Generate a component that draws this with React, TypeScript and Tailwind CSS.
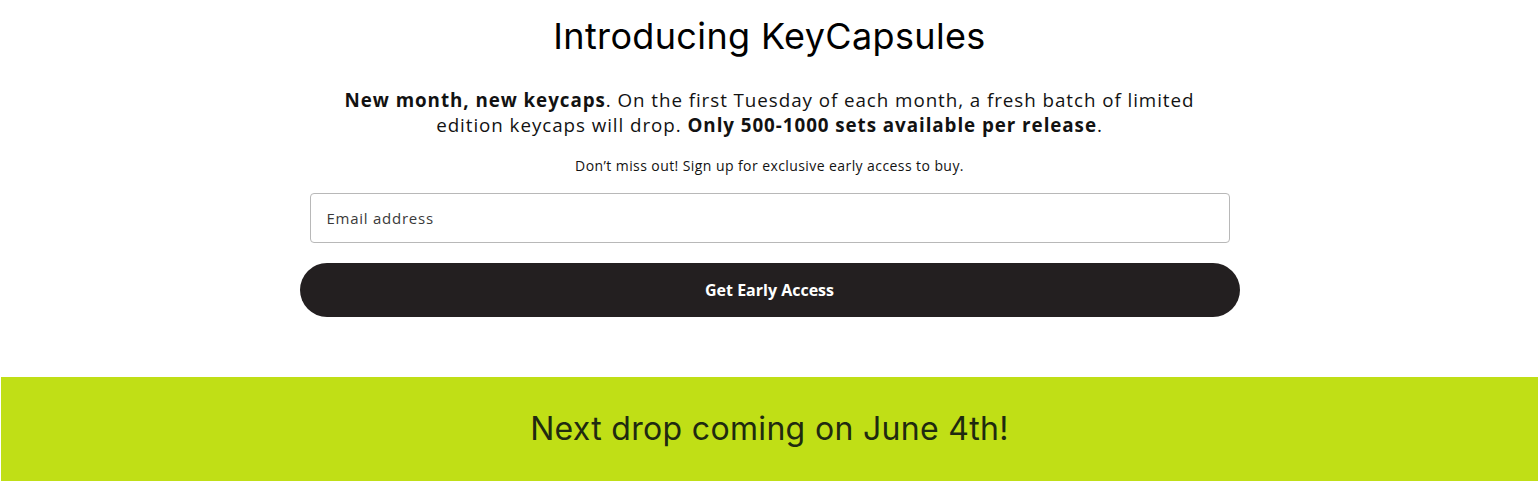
export default function App() {
  return (
    <div className="w-full bg-white" style={{ fontFamily: '"Open Sans", sans-serif' }}>
      <section className="mx-auto w-[940px] pt-[14px] pb-[60px] flex flex-col items-center text-center">
        <h1 className="text-[36px] leading-[44px] tracking-[0.01em] text-black font-normal" style={{ fontFamily: 'Inter, sans-serif' }}>
          Introducing KeyCapsules
        </h1>
        <p className="mt-[30px] w-[920px] text-[18.8px] leading-[25px] tracking-[0.05em] text-[#121212]">
          <strong className="font-bold">New month, new keycaps</strong>. On the first Tuesday of each month, a fresh batch of limited
          <br />
          edition keycaps will drop. <strong className="font-bold">Only 500-1000 sets available per release</strong>.
        </p>
        <p className="mt-[19px] text-[14px] leading-[18px] tracking-[0.03em] text-[#121212]">
          Don’t miss out! Sign up for exclusive early access to buy.
        </p>
        <div className="mt-[18px] w-[920px] h-[50px] border border-[#b8b8b8] rounded-[4px] flex items-center px-[16px]">
          <span className="text-[15px] tracking-[0.05em] text-[#3a3a3a]">Email address</span>
        </div>
        <button className="mt-[20px] w-full h-[54px] rounded-full bg-[#231f20] text-white text-[16px] font-bold">
          Get Early Access
        </button>
      </section>
      <div className="mx-[1px] h-[104px] bg-[#c0df16] flex items-center justify-center">
        <span className="text-[32px] tracking-[0.01em] text-[#1f2a10]" style={{ fontFamily: 'Inter, sans-serif' }}>
          Next drop coming on June 4th!
        </span>
      </div>
    </div>
  );
}
